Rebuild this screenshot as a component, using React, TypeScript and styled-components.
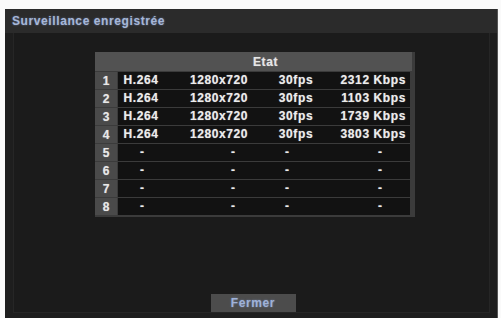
import React from 'react';
import styled, {createGlobalStyle} from 'styled-components';

const GlobalStyle = createGlobalStyle`
  html, body {
    margin: 0;
    padding: 0;
    background: #fafafa;
    font-family: "Liberation Sans", Arial, sans-serif;
  }
`;

const Frame = styled.div`
  box-sizing: border-box;
  margin: 9px 0 0 5px;
  width: 493px;
  height: 309px;
  background: #1e1e1e;
  border-right: 1px solid #555;
  display: flex;
  flex-direction: column;
`;

const TitleBar = styled.div`
  height: 24px;
  flex: none;
  background: #2b2b2b;
  padding-left: 7px;
  display: flex;
  align-items: center;
`;

const Title = styled.span`
  font-size: 12px;
  font-weight: bold;
  letter-spacing: 0.6px;
  color: #a6b7d8;
  text-shadow: 0 0 2px rgba(140, 165, 220, 0.6);
`;

const Body = styled.div`
  flex: 1;
  display: flex;
  padding: 0 7px 5px 8px;
`;

const Inner = styled.div`
  flex: 1;
  box-sizing: border-box;
  background: #1b1b1b;
  border: 1px solid #262626;
  border-top: none;
  display: flex;
  flex-direction: column;
`;

const Table = styled.div`
  margin: 19px 0 0 81px;
  width: 320px;
  box-sizing: border-box;
  background: #3b3b3b;
  padding: 0 3px 2px 0;
  display: flex;
  flex-direction: column;
  gap: 1px;
`;

const Header = styled.div`
  height: 19px;
  background: #525252;
  color: #e6e6e6;
  font-size: 12px;
  font-weight: bold;
  letter-spacing: 0.6px;
  display: flex;
  align-items: center;
  justify-content: center;
  padding-left: 24px;
  text-shadow: 0 0 1px rgba(255, 255, 255, 0.5);
`;

const Row = styled.div`
  height: 17px;
  display: grid;
  grid-template-columns: 22px 292px;
  column-gap: 1px;
`;

const Num = styled.div`
  background: #4a4a4a;
  color: #e8e8e8;
  font-size: 12px;
  font-weight: bold;
  display: flex;
  align-items: center;
  justify-content: center;
  text-shadow: 0 0 1px rgba(255, 255, 255, 0.5);
`;

const Data = styled.div`
  background: #121212;
  display: grid;
  grid-template-columns: 46px 110px 44px 92px;
`;

const Cell = styled.div<{$align: 'left' | 'center' | 'right'; $indent?: number}>`
  color: #ececec;
  font-size: 12px;
  font-weight: bold;
  letter-spacing: 0.6px;
  line-height: 17px;
  white-space: nowrap;
  text-align: ${p => p.$align};
  padding-left: ${p => p.$indent ?? 0}px;
  padding-right: ${p => (p.$align === 'right' ? 4 : 0)}px;
  text-shadow: 0 0 1px rgba(255, 255, 255, 0.5);
`;

const ButtonBar = styled.div`
  margin-top: auto;
  display: flex;
  justify-content: center;
  padding-left: 3px;
`;

const CloseButton = styled.button`
  width: 85px;
  height: 18px;
  border: none;
  background: #4c4c4c;
  color: #9fb2d8;
  font-family: "Liberation Sans", Arial, sans-serif;
  font-size: 12px;
  font-weight: bold;
  letter-spacing: 0.6px;
  padding: 0;
  text-shadow: 0 0 2px rgba(140, 165, 220, 0.6);
`;

const streams = [
  ['H.264', '1280x720', '30fps', '2312 Kbps'],
  ['H.264', '1280x720', '30fps', '1103 Kbps'],
  ['H.264', '1280x720', '30fps', '1739 Kbps'],
  ['H.264', '1280x720', '30fps', '3803 Kbps'],
  null,
  null,
  null,
  null,
];

// left indents where the dash sits in empty rows
const dashIndent = [22, 67, 11, 60];
const aligns: Array<'left' | 'center' | 'right'> = ['center', 'center', 'center', 'right'];

const App = () => {
  return (
    <>
      <GlobalStyle />
      <Frame>
        <TitleBar>
          <Title>Surveillance enregistrée</Title>
        </TitleBar>
        <Body>
          <Inner>
            <Table>
              <Header>Etat</Header>
              {streams.map((s, i) => (
                <Row key={i}>
                  <Num>{i + 1}</Num>
                  <Data>
                    {s
                      ? s.map((v, j) => <Cell key={j} $align={aligns[j]}>{v}</Cell>)
                      : dashIndent.map((ind, j) => <Cell key={j} $align="left" $indent={ind}>-</Cell>)}
                  </Data>
                </Row>
              ))}
            </Table>
            <ButtonBar>
              <CloseButton>Fermer</CloseButton>
            </ButtonBar>
          </Inner>
        </Body>
      </Frame>
    </>
  );
};

export default App;
